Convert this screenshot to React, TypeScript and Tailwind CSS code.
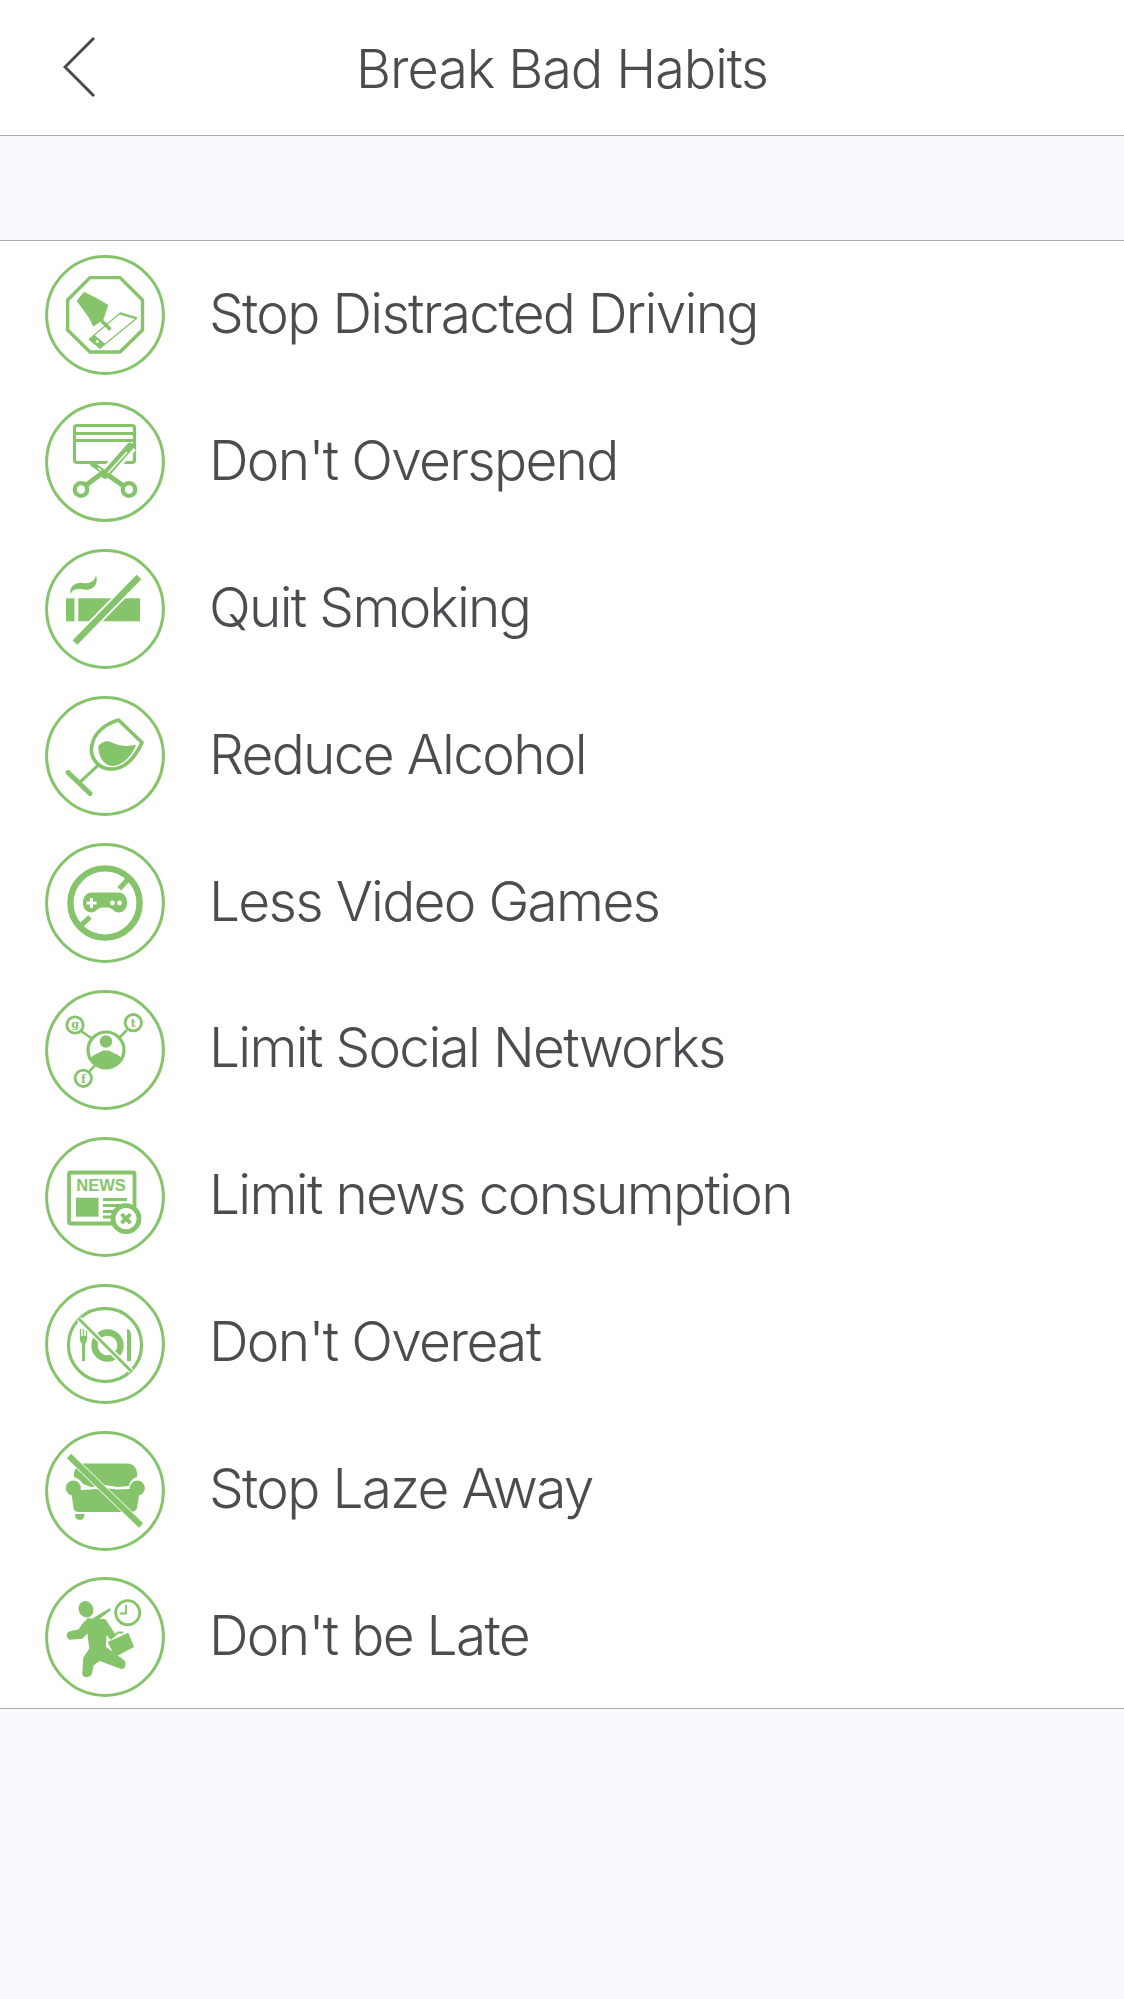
const G = "#85c46a";

function Icon({ children }: { children: React.ReactNode }) {
  return (
    <svg width="120" height="120" viewBox="0 0 120 120" className="shrink-0">
      <circle cx="60" cy="60" r="58.4" fill="none" stroke={G} strokeWidth="3" />
      {children}
    </svg>
  );
}

function Driving() {
  return (
    <Icon>
      <path d="M45 22.6H75L97.5 45V75L75 97H45L22.6 75V45Z" fill="none" stroke={G} strokeWidth="3.4" />
      <path d="M31.7 45.7L39 36.7L51.7 43.3L63.3 50L58.3 65L66.7 73.3L64.3 76L55 66.7L48.3 71.7L44.3 63.3Z" fill={G} />
      <path d="M44.3 84.3L75 58.3L91.7 63.3L55 93.3Z" fill="none" stroke={G} strokeWidth="1.3" strokeLinejoin="round" />
      <path d="M44.3 84.3L49.5 80L60.5 89L55 93.3Z" fill={G} />
      <circle cx="52.3" cy="86.6" r="1.5" fill="#fff" />
      <path d="M75 58.3L91.7 63.3" stroke={G} strokeWidth="2.4" />
    </Icon>
  );
}

function Overspend() {
  return (
    <Icon>
      <rect x="29.5" y="23.5" width="60" height="37" rx="2.5" fill="none" stroke={G} strokeWidth="3.2" />
      <path d="M28 31.5H91M28 38.5H91" stroke={G} strokeWidth="2.8" />
      <path d="M57 76L86 44" stroke="#fff" strokeWidth="13" />
      <path d="M80 85L46 61" stroke={G} strokeWidth="5" />
      <path d="M53 66L64 74" stroke="#fff" strokeWidth="1.4" />
      <path d="M40 84L60 69" stroke={G} strokeWidth="5" />
      <path d="M60 73L85 44.5" stroke={G} strokeWidth="7.5" strokeLinecap="round" />
      <path d="M63 71L82 50" stroke="#fff" strokeWidth="1.4" />
      <circle cx="36" cy="87.5" r="6.3" fill="#fff" stroke={G} strokeWidth="4.2" />
      <circle cx="84" cy="87.5" r="6.3" fill="#fff" stroke={G} strokeWidth="4.2" />
    </Icon>
  );
}

function Smoking() {
  return (
    <Icon>
      <rect x="21" y="49.3" width="8.5" height="23" fill={G} />
      <rect x="33.3" y="49.3" width="61.7" height="23" fill={G} />
      <path d="M25.5 45C24 37 31 33 38 34C45 35 50 32 51 26C54 35 48 42 39 40.5C33 39.5 28 40 25.5 45Z" fill={G} />
      <path d="M30 93.5L94 28" stroke="#fff" strokeWidth="10" />
      <path d="M30 93.5L94 28" stroke={G} strokeWidth="6.5" />
    </Icon>
  );
}

function Alcohol() {
  return (
    <Icon>
      <path d="M73.5 24L97 46.5C90 62 80 72 68 73C54 74 44 62 47 49C49 37 60 28 73.5 24Z" fill="none" stroke={G} strokeWidth="3.6" strokeLinejoin="round" />
      <path d="M53.3 50C58 45 62 44 68 47C75 50 84 51 91 48.5C88 58 79 69 68 70C59 70 53 60 53.3 50Z" fill={G} />
      <path d="M53 69.3L33.3 87.7" stroke={G} strokeWidth="3.2" />
      <path d="M23 76.5L45 97.5" stroke={G} strokeWidth="5" strokeLinecap="round" />
    </Icon>
  );
}

function Games() {
  return (
    <Icon>
      <circle cx="60" cy="60" r="34.6" fill="none" stroke={G} strokeWidth="6.4" />
      <path d="M74.3 45.7L85 34M35 83.3L45 74" stroke={G} strokeWidth="5" />
      <path d="M47 49.5H73C79 49.5 82 54 82 60C82 66 78 69.5 74 69.5C69 69.5 67 64.5 63 64.5H57C53 64.5 51 69.5 46 69.5C42 69.5 38 66 38 60C38 54 41 49.5 47 49.5Z" fill={G} />
      <path d="M46.5 55V65M41.5 60H51.5" stroke="#fff" strokeWidth="3" />
      <circle cx="67.5" cy="60" r="2.4" fill="#fff" />
      <circle cx="74.5" cy="60" r="2.4" fill="#fff" />
    </Icon>
  );
}

function Social() {
  return (
    <Icon>
      <path d="M36 41L49 50M82 40L73 49M44 82L52 73" stroke={G} strokeWidth="2.6" />
      <circle cx="61" cy="60" r="18" fill="#fff" stroke={G} strokeWidth="3.2" />
      <circle cx="61" cy="51.5" r="6.2" fill={G} />
      <path d="M45 68.5C50 63 55 63 58 60.5H64C67 63 72 63 77 68.5C73 75 67 79 61 79C55 79 49 75 45 68.5Z" fill={G} />
      <circle cx="30" cy="35" r="8.2" fill="#fff" stroke={G} strokeWidth="2.8" />
      <circle cx="88.3" cy="32.7" r="8.2" fill="#fff" stroke={G} strokeWidth="2.8" />
      <circle cx="38.3" cy="88.3" r="8.2" fill="#fff" stroke={G} strokeWidth="2.8" />
      <text x="30" y="38" textAnchor="middle" fontSize="11" fontWeight="700" fill={G} fontFamily="'DejaVu Serif', serif">g</text>
      <text x="88.3" y="37" textAnchor="middle" fontSize="11" fontWeight="700" fill={G} fontFamily="'DejaVu Serif', serif">t</text>
      <text x="38.3" y="92.5" textAnchor="middle" fontSize="11" fontWeight="700" fill={G} fontFamily="'DejaVu Serif', serif">f</text>
    </Icon>
  );
}

function News() {
  return (
    <Icon>
      <rect x="24" y="35.5" width="65.5" height="51" rx="1.5" fill="none" stroke={G} strokeWidth="3.8" />
      <text x="56" y="54" textAnchor="middle" fontSize="16.5" fontWeight="700" fill={G} fontFamily="'Liberation Sans', sans-serif">NEWS</text>
      <rect x="31" y="60.7" width="22.5" height="19" fill={G} />
      <path d="M58 62.5H82M58 68.5H80M58 74.5H72M58 80H68" stroke={G} strokeWidth="2.8" />
      <circle cx="81" cy="81.7" r="13" fill="#fff" stroke={G} strokeWidth="4.8" />
      <path d="M76.5 77.2L85.5 86.2M85.5 77.2L76.5 86.2" stroke={G} strokeWidth="3.8" />
    </Icon>
  );
}

function Overeat() {
  return (
    <Icon>
      <circle cx="60" cy="61" r="36.6" fill="none" stroke={G} strokeWidth="3.2" />
      <circle cx="62.5" cy="61.5" r="13" fill="none" stroke={G} strokeWidth="6.4" />
      <path d="M35.5 45V55M38.5 45V55M41.5 45V55" stroke={G} strokeWidth="1.3" />
      <path d="M35 52H42V56C42 58 40 59.5 40 60V77H37V60C37 59.5 35 58 35 56Z" fill={G} />
      <path d="M82 45C85 45 86 48 86 53V77H82Z" fill={G} />
      <path d="M34 35L86 87" stroke="#fff" strokeWidth="6" />
      <path d="M34 35L86 87" stroke={G} strokeWidth="2.8" />
    </Icon>
  );
}

function Couch() {
  return (
    <Icon>
      <path d="M40 32.6H82C89 32.6 93 38 92 46C88 47 85 50 84 55L72 56L60 54L46 56L38 53C36 50 33 47 29 46C28 39 33 32.6 40 32.6Z" fill={G} />
      <circle cx="28.3" cy="57" r="7.6" fill={G} />
      <circle cx="92.3" cy="57" r="7.6" fill={G} />
      <path d="M26 59H36L46 58.5L60 57L72 58.5L84 58H95L92 77C91 80 88 81 85 81H34C31 81 29 80 28.5 77Z" fill={G} />
      <path d="M30 83H39.5C39.5 86 38 89 35 89C31 89 30 86 30 83Z" fill={G} />
      <path d="M24 25L96 94.5" stroke="#fff" strokeWidth="7.6" />
      <path d="M24 25L96 94.5" stroke={G} strokeWidth="6" />
    </Icon>
  );
}

function Late() {
  return (
    <Icon>
      <circle cx="82.7" cy="35.7" r="12" fill="#fff" stroke={G} strokeWidth="2.8" />
      <path d="M81 27.7V36.5H75" fill="none" stroke={G} strokeWidth="1.8" />
      <ellipse cx="41" cy="32.3" rx="7.3" ry="8.4" fill={G} transform="rotate(-25 41 32.3)" />
      <path d="M48 41L65 31L65.5 33.5L53 43Z" fill={G} />
      <path
        d="M43 42L60 43L70 58L66 62L61 56L60 70L79 84C81 88 79 92 76 91L62 86L55 83L48 88L46 97C44 101 38 100 38 96L39 81L45 72L43 55L37 61L25 62C21 60 22 56 25 55L34 53L39 46Z"
        fill={G}
        stroke={G}
        strokeWidth="1.5"
        strokeLinejoin="round"
      />
      <path d="M62.7 65L83.3 55.7L89 70L70 80Z" fill={G} />
      <path d="M68 60L73 55.5L78 55.5" fill="none" stroke={G} strokeWidth="1.8" />
    </Icon>
  );
}

const HABITS: { label: string; icon: () => React.ReactNode }[] = [
  { label: "Stop Distracted Driving", icon: Driving },
  { label: "Don't Overspend", icon: Overspend },
  { label: "Quit Smoking", icon: Smoking },
  { label: "Reduce Alcohol", icon: Alcohol },
  { label: "Less Video Games", icon: Games },
  { label: "Limit Social Networks", icon: Social },
  { label: "Limit news consumption", icon: News },
  { label: "Don't Overeat", icon: Overeat },
  { label: "Stop Laze Away", icon: Couch },
  { label: "Don't be Late", icon: Late },
];

export default function App() {
  return (
    <div className="min-h-[1999px] bg-[#f9fafe] font-['Inter','Liberation_Sans',sans-serif] font-light text-[#4b4b50]">
      <header className="grid h-[136px] grid-cols-[1fr_auto_1fr] items-center border-b-[1.5px] border-[#ababae] bg-white">
        <svg width="32" height="60" viewBox="0 0 32 60" className="ml-[63px] -mt-[2px]">
          <path d="M31 1L2 30L31 59" fill="none" stroke="#4a4a4a" strokeWidth="3" />
        </svg>
        <h1 className="mt-[2px] text-[54px] leading-none tracking-[-1.1px]">Break Bad Habits</h1>
        <div />
      </header>
      <div className="h-[104px]" />
      <ul className="h-[1469px] border-y-[1.5px] border-[#ababae] bg-white pt-[1px]">
        {HABITS.map(({ label, icon: HabitIcon }) => (
          <li key={label} className="flex h-[146.9px] items-center gap-[44px] pl-[45px]">
            <HabitIcon />
            <span className="-mt-[4px] text-[55px] leading-none tracking-[-1.7px]">{label}</span>
          </li>
        ))}
      </ul>
    </div>
  );
}
